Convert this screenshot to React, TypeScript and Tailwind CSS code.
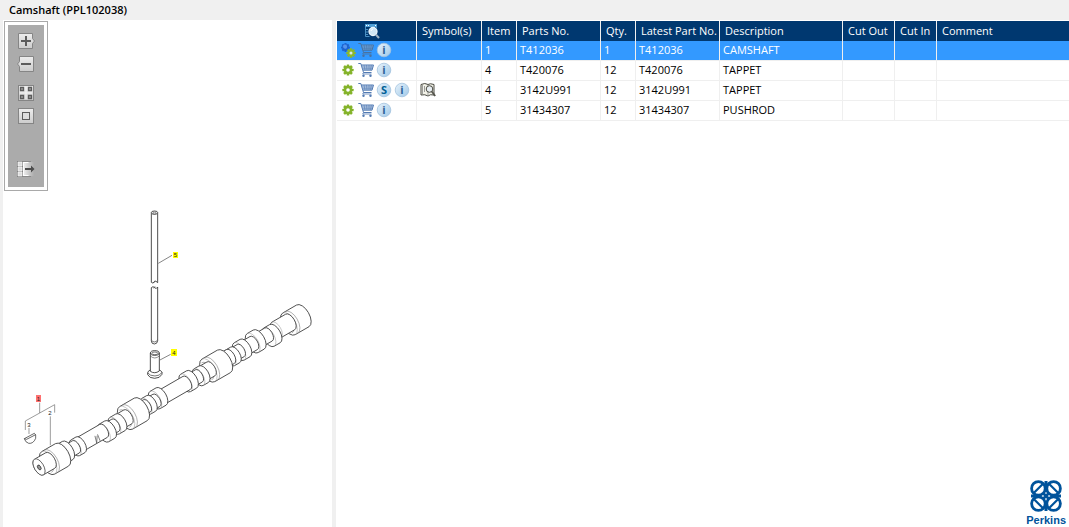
import type { ReactNode } from "react";

type Part = {
	item: string;
	partNo: string;
	qty: string;
	latest: string;
	description: string;
	selected?: boolean;
	superseded?: boolean;
	note?: boolean;
};

const PARTS: Part[] = [
	{ item: "1", partNo: "T412036", qty: "1", latest: "T412036", description: "CAMSHAFT", selected: true },
	{ item: "4", partNo: "T420076", qty: "12", latest: "T420076", description: "TAPPET" },
	{ item: "4", partNo: "3142U991", qty: "12", latest: "3142U991", description: "TAPPET", superseded: true, note: true },
	{ item: "5", partNo: "31434307", qty: "12", latest: "31434307", description: "PUSHROD" },
];

const HEADERS = [
	"Symbol(s)",
	"Item",
	"Parts No.",
	"Qty.",
	"Latest Part No.",
	"Description",
	"Cut Out",
	"Cut In",
	"Comment",
];

/* Sections of the shaft, far end first: start, end, radius, offset from the axis */
const SECTIONS = [
	[288, 304, 12.5, 1],
	[274, 290, 9, 0],
	[264, 271, 10.5, 2.5],
	[252, 265, 7.5, 0],
	[247, 254, 11, -0.5],
	[238, 248, 7.5, 0],
	[231, 238, 10, 0],
	[226, 233, 7, 0],
	[220, 226, 9, 1],
	[213, 221, 8, 0],
	[195, 213, 13, 1],
	[189, 198, 8, 1],
	[183, 189, 9.5, 2],
	[176, 184, 7, 1],
	[169, 176, 10, 0.5],
	[137, 170, 7.5, 1],
	[134, 141, 10, 0],
	[129, 135, 7, 1],
	[123, 129, 9, 1],
	[116, 124, 7, 1],
	[100, 117, 13, 1],
	[93, 102, 8, 1],
	[86, 93, 9.5, 2],
	[80, 87, 7, 2],
	[73, 80, 10, 3],
	[46, 74, 7.5, 1],
	[41, 47, 9, 1.5],
	[33, 42, 7, 1],
	[27, 33, 10.5, 0],
	[10, 26, 13, 1],
	[0, 13, 9, 0],
];

function Section({ from, to, r, dy }: { from: number; to: number; r: number; dy: number }) {
	const rx = r * 0.52;
	const wide = r > 12;
	return (
		<g transform={`translate(0 ${dy})`}>
			<path
				d={`M${from} ${-r}L${to} ${-r}A${rx} ${r} 0 0 1 ${to} ${r}L${from} ${r}A${rx} ${r} 0 0 1 ${from} ${-r}Z`}
				fill="#fff"
				stroke="#3c3c3c"
				strokeWidth="0.8"
			/>
			<path
				d={`M${from} ${-r}A${rx} ${r} 0 0 1 ${from} ${r}`}
				fill="none"
				stroke="#999"
				strokeWidth="0.5"
			/>
			{wide ? (
				<path
					d={`M${from + 3} ${-r}A${rx} ${r} 0 0 1 ${from + 3} ${r}M${from - 2} ${3 - r}A${rx - 1} ${r - 3} 0 0 1 ${from - 2} ${r - 3}`}
					fill="none"
					stroke="#888"
					strokeWidth="0.6"
				/>
			) : null}
		</g>
	);
}

function Drawing() {
	return (
		<svg viewBox="3 200 329 290" className="mt-[9px] w-full" role="img" aria-label="Camshaft">
			<g transform="translate(39 467) rotate(-30)">
				{SECTIONS.map(([from, to, r, dy]) => (
					<Section key={from} from={from} to={to} r={r} dy={dy} />
				))}
				<ellipse cx="0" cy="0" rx="4.7" ry="9" fill="#fff" stroke="#4a4a4a" strokeWidth="0.7" />
				<ellipse cx="0" cy="0.5" rx="1.5" ry="2.6" fill="#999" stroke="#333" strokeWidth="0.8" />
				<path d="M64 1L62 8M67 1L66 8M62 8l4-6" fill="none" stroke="#444" strokeWidth="0.6" />
			</g>

			{/* pushrod */}
			<g transform="translate(110 200) scale(0.3333)" fill="#fff" stroke="#333" strokeWidth="2.6">
				<path d="M124 38V247Q129 252 133 246T143 248V38" />
				<ellipse cx="133.5" cy="38" rx="9.5" ry="5" />
				<ellipse cx="133.5" cy="39" rx="5" ry="2.5" strokeWidth="1.5" />
				<path d="M124 422V263Q129 257 134 263T143 261V422Q142 432 133 432T124 422Z" />
				<path d="M124 420Q133 432 143 420M131 248l4-6M131 265l4-6" fill="none" strokeWidth="2" />
				<path d="M145 190L186 166M150 480L182 463" fill="none" strokeWidth="1.8" />
				{/* tappet */}
				<path d="M113 519V524Q118 535 134 535T156 523V517Q152 510 147 510H121Q114 512 113 519Z" />
				<path d="M113 519Q120 528 135 528T156 517" fill="none" strokeWidth="2" />
				<path d="M121 459V514Q134 523 148 513V459Z" />
				<ellipse cx="134.5" cy="459" rx="13" ry="7" />
				<ellipse cx="134.5" cy="460" rx="9" ry="4" strokeWidth="2" />
				<path d="M121 468Q134 480 148 468" fill="none" strokeWidth="1.6" />
			</g>

			{/* key and the item bracket */}
			<g transform="translate(0 370) scale(0.3333)" fill="none" stroke="#777" strokeWidth="2.2">
				<path d="M119 98V129M76 180V153L164 104V128M151 139V226M87 174V192" />
				<path d="M73 206L103 190Q109 192 107 205Q100 222 86 220Q76 217 73 206Z" fill="#fff" stroke="#333" />
				<path d="M73 206L80 208L107 194" stroke="#333" />
			</g>

			<rect x="36" y="395" width="5" height="7" fill="#ff7070" />
			<rect x="173" y="252" width="5" height="6" fill="#ffff00" />
			<rect x="171" y="349" width="6" height="7" fill="#ffff00" />
			<g fontFamily="Liberation Sans, sans-serif" fontSize="6" textAnchor="middle" fill="#222">
				<text x="38.5" y="401">1</text>
				<text x="50" y="415">2</text>
				<text x="29" y="427">3</text>
				<text x="174" y="355">4</text>
				<text x="175.5" y="257">5</text>
			</g>
		</svg>
	);
}

function ToolButton({ label, children }: { label: string; children: ReactNode }) {
	return (
		<button type="button" aria-label={label} className="block h-4 w-[18px]">
			<svg viewBox="0 0 18 16" className="h-4 w-[18px]">
				<defs>
					<linearGradient id="face" x1="0" y1="0" x2="0" y2="1">
						<stop offset="0" stopColor="#ededed" />
						<stop offset="1" stopColor="#cccccc" />
					</linearGradient>
					<linearGradient id="fade" x1="0" y1="0" x2="1" y2="0">
						<stop offset="0" stopColor="#f2f2f2" />
						<stop offset="1" stopColor="#ababab" />
					</linearGradient>
				</defs>
				{children}
			</svg>
		</button>
	);
}

function Toolbar() {
	return (
		<div className="ml-px mt-px w-11 border border-[#a9a9a9] bg-white p-[3px]">
			<div className="flex flex-col items-center gap-[13px] bg-[#ababab] pt-2 pb-[10px]">
				<div className="flex flex-col gap-[7px]">
					<ToolButton label="Zoom in">
						<path d="M1.5 .5h14v5l2 2.5l-2 2.5v5h-14Z" fill="url(#face)" stroke="#858585" />
						<path d="M9 3v10M4 8h10" stroke="#5c5c5c" strokeWidth="2" />
					</ToolButton>
					<ToolButton label="Zoom out">
						<path d="M2.500 .5h14v15h-14v-5l-2-2.500l2-2.500Z" fill="url(#face)" stroke="#858585" />
						<path d="M4 8h10" stroke="#5c5c5c" strokeWidth="2" />
					</ToolButton>
				</div>
				<div className="flex flex-col gap-[7px]">
					<ToolButton label="Fit to window">
						<rect x="1.500" y=".5" width="15" height="15" fill="url(#face)" stroke="#858585" />
						<path
							d="M3.500 2.500h3v3h-3zM11.500 2.500h3v3h-3zM3.500 10.500h3v3h-3zM11.500 10.500h3v3h-3z"
							fill="#a5a5a5"
							stroke="#5c5c5c"
							strokeWidth="1.300"
						/>
						<path d="M9 2v12M3 8h12" stroke="#f4f4f4" />
					</ToolButton>
					<ToolButton label="Actual size">
						<rect x="1.500" y=".5" width="15" height="15" fill="url(#face)" stroke="#858585" />
						<rect x="5.500" y="4.500" width="7" height="7" fill="#ddd" stroke="#5c5c5c" />
					</ToolButton>
				</div>
				<div className="pt-6">
					<ToolButton label="Hide list">
						<rect x="0" y="0" width="6" height="16" fill="#858585" />
						<path d="M1 1h4v4H1zM1 6h4v4H1zM1 11h4v4H1z" fill="#ddd" stroke="#fff" strokeWidth=".6" />
						<rect x="6" y="1" width="11" height="14" fill="url(#fade)" />
						<path d="M6 .5h8M6 15.500h8" stroke="#8b8b8b" />
						<path d="M6.500 1v14M6.500 1.500h5M6.500 14.500h5" stroke="#fff" />
						<path d="M8 7h6V4.500L17.500 8L14 11.500V9H8Z" fill="#4c4c4c" />
					</ToolButton>
				</div>
			</div>
		</div>
	);
}

const GEAR_TEETH = [0, 45, 90, 135];

function Gear({ x, y, s, fill, hole }: { x: number; y: number; s: number; fill: string; hole: string }) {
	return (
		<g transform={`translate(${x} ${y}) scale(${s})`}>
			{GEAR_TEETH.map((a) => (
				<rect key={a} x="-1.3" y="-5.6" width="2.6" height="11.2" rx=".6" fill={fill} transform={`rotate(${a})`} />
			))}
			<circle r="4.2" fill={fill} />
			<circle r="1.8" fill={hole} />
		</g>
	);
}

function GearIcon({ selected }: { selected?: boolean }) {
	return (
		<svg viewBox="0 0 16 16" className="size-4 shrink-0">
			{selected ? (
				<>
					<Gear x={5.5} y={5.5} s={0.8} fill="#1d63cf" hole="#3f86ea" />
					<circle cx="5" cy="4.5" r="2" fill="#5594ee" />
					<Gear x={11} y={11} s={0.85} fill="#8cb82b" hole="#d6e7ec" />
				</>
			) : (
				<Gear x={8} y={8} s={1} fill="#84b32a" hole="#fff" />
			)}
		</svg>
	);
}

function CartIcon({ selected }: { selected?: boolean }) {
	const line = selected ? "#4a729f" : "#537bb3";
	return (
		<svg viewBox="0 0 16 16" className="size-4" fill="none">
			<path d="M3.500 3h12L14 8H5z" fill={selected ? "#6ba7e6" : "#c3d4ea"} />
			<path d="M3.800 5h11M4.500 6.700h10M6 3l1 5M8.500 3l.5 5M11 3v5M13.300 3l-.7 5" stroke={line} strokeWidth=".6" />
			<path d="M.3 1.500h2.500l2.700 9h8M3.200 3h12.300L14 8.200H5" stroke={line} />
			<path d="M5.500 10.500l-.8 1.500h8.800" stroke={line} strokeWidth=".8" />
			<circle cx="5.500" cy="13.700" r="1.200" fill={line} />
			<circle cx="12.500" cy="13.700" r="1.200" fill={line} />
		</svg>
	);
}

function Badge({ label, ink }: { label: string; ink: string }) {
	return (
		<svg viewBox="0 0 16 16" className="size-4">
			<defs>
				<linearGradient id="disc" x1="0" y1="0" x2="1" y2="1">
					<stop offset="0" stopColor="#e8f3fb" />
					<stop offset="1" stopColor="#9fc8e8" />
				</linearGradient>
			</defs>
			<circle cx="8" cy="8" r="6.800" fill="url(#disc)" stroke="#a3c3de" strokeWidth=".8" />
			<text x="8" y="12" fill={ink} fontSize="11" fontWeight="bold" textAnchor="middle">
				{label}
			</text>
		</svg>
	);
}

function BookIcon() {
	return (
		<svg viewBox="0 0 16 16" className="size-4" fill="none">
			<path d="M1 2.500Q5 .5 8 2.500Q10 1 14 2.500V13Q10 12 8 14Q5 12 1 13Z" fill="#f2f2e8" stroke="#4a4a42" />
			<path d="M2.500 3v9M8 3v11M4.500 4v6" stroke="#888" strokeWidth=".8" />
			<circle cx="9.500" cy="7" r="3.300" fill="#e8eef2" stroke="#4a4a42" />
			<path d="M11.800 9.500L15.200 14" stroke="#55554d" strokeWidth="1.800" />
		</svg>
	);
}

function SearchListIcon() {
	return (
		<svg viewBox="0 0 16 16" className="mx-auto size-4" fill="none">
			<path d="M1 1h12v3H1Z" fill="#4f9fd6" />
			<path d="M2 2.500h1M4 2.500h1M11 2.500h1" stroke="#fff" />
			<path d="M1.500 4v9.500h4M2 6.500h2M2 9h2M2 11.500h2M12.500 4v1" stroke="#4a90c4" />
			<circle cx="9" cy="8.500" r="4" fill="#cfe6f5" stroke="#eaf5fc" strokeWidth="1.300" />
			<path d="M7 8a2.500 2.500 0 0 1 2-2" stroke="#fff" />
			<path d="M11.800 11.500L15 15" stroke="#9fb4c6" strokeWidth="2" />
		</svg>
	);
}

function PartsTable() {
	return (
		<table className="ml-px mt-px w-full table-fixed border-separate border-spacing-0 text-left text-[11px] leading-[18px]">
			<colgroup>
				<col className="w-[80px]" />
				<col className="w-[65px]" />
				<col className="w-[35px]" />
				<col className="w-[84px]" />
				<col className="w-[35px]" />
				<col className="w-[84px]" />
				<col className="w-[123px]" />
				<col className="w-[52px]" />
				<col className="w-[42px]" />
				<col />
			</colgroup>
			<thead className="bg-[#003870] text-white">
				<tr className="h-5">
					<th className="border-r border-[#f0f0f0] p-0">
						<button type="button" aria-label="Find part" className="block w-full pr-2.5">
							<SearchListIcon />
						</button>
					</th>
					{HEADERS.map((header) => (
						<th
							key={header}
							className="whitespace-nowrap border-r border-[#f0f0f0] p-0 pl-[5px] font-normal last:border-r-0"
						>
							{header}
						</th>
					))}
				</tr>
			</thead>
			<tbody>
				{PARTS.map((part) => (
					<PartRow key={part.partNo} part={part} />
				))}
			</tbody>
		</table>
	);
}

function PartRow({ part }: { part: Part }) {
	const cell = "whitespace-nowrap border-r border-b border-[#efefef] p-0 pl-[3px] align-top last:border-r-0";
	return (
		<tr className={part.selected ? "h-5 bg-[#3399ff] text-white" : "h-5 bg-white text-black"}>
			<td className={cell}>
				<div className="flex h-[18px] items-center gap-0.5">
					<GearIcon selected={part.selected} />
					<button type="button" aria-label={`Add ${part.partNo} to cart`}>
						<CartIcon selected={part.selected} />
					</button>
					{part.superseded ? (
						<button type="button" aria-label="Supersession">
							<Badge label="S" ink="#005f96" />
						</button>
					) : null}
					<button type="button" aria-label={`Information on ${part.partNo}`}>
						<Badge label="i" ink="#2c6198" />
					</button>
				</div>
			</td>
			<td className={cell}>
				{part.note ? (
					<button type="button" aria-label="Note" className="flex h-[18px] items-center">
						<BookIcon />
					</button>
				) : null}
			</td>
			<td className={cell}>{part.item}</td>
			<td className={cell}>{part.partNo}</td>
			<td className={cell}>{part.qty}</td>
			<td className={cell}>{part.latest}</td>
			<td className={cell}>{part.description}</td>
			<td className={cell} />
			<td className={cell} />
			<td className={cell} />
		</tr>
	);
}

function PerkinsLogo() {
	return (
		<div className="mt-auto mr-[3px] flex flex-col items-center self-end text-[#00539b]">
			<svg viewBox="0 0 34 34" className="size-[34px]" fill="none" stroke="currentColor" strokeWidth="2.8">
				<circle cx="9.4" cy="9.4" r="6.8" />
				<circle cx="24.6" cy="9.4" r="6.8" />
				<circle cx="9.4" cy="24.6" r="6.8" />
				<circle cx="24.6" cy="24.6" r="6.8" />
				<path d="M4.500 14.300L14.300 4.500M19.700 4.500L29.500 14.300M29.500 19.700L19.700 29.500M14.300 29.500L4.500 19.700" strokeWidth="2.200" />
				<path d="M14 14L20 20M20 14L14 20" />
				<path d="M17 2v4M17 28v4M2 17h4M28 17h4" strokeWidth="3" />
			</svg>
			<span className="font-['Liberation_Sans',sans-serif] text-[11px] font-bold leading-[14px]">Perkins</span>
		</div>
	);
}

export default function App() {
	return (
		<div className="flex min-h-screen flex-col bg-[#f0f0f0] font-['Open_Sans','Noto_Sans',sans-serif]">
			<h1 className="h-5 pl-[9px] text-[11px] font-semibold leading-5 text-black">Camshaft (PPL102038)</h1>
			<div className="flex flex-1 pl-[3px]">
				<section className="w-[329px] shrink-0 bg-white">
					<Toolbar />
					<Drawing />
				</section>
				<section className="ml-1 flex min-w-0 flex-1 flex-col overflow-hidden bg-white">
					<PartsTable />
					<PerkinsLogo />
				</section>
			</div>
		</div>
	);
}
